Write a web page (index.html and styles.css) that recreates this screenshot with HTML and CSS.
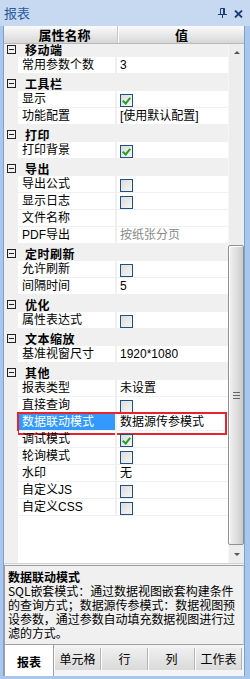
FILE: index.html
```html
<!DOCTYPE html>
<html lang="zh">
<head>
    <meta charset="UTF-8">
    <title>报表属性</title>
    <link rel="stylesheet" href="styles.css">
</head>
<body>
<div class="panel">
    <div class="titlebar">
        <span class="title">报表</span>
        <span class="tools">
            <svg class="pin" width="9" height="10" viewBox="0 0 9 10">
                <path d="M2.5 0.5h4v5.5" fill="none" stroke="#1c3d78" stroke-width="1"/>
                <path d="M2.5 0.5v5.5" fill="none" stroke="#1c3d78" stroke-width="1"/>
                <rect x="5" y="0.5" width="2" height="5.5" fill="#1c3d78"/>
                <rect x="0" y="6" width="9" height="1" fill="#1c3d78"/>
                <rect x="4" y="7" width="1" height="3" fill="#1c3d78"/>
            </svg>
            <svg class="close" width="9" height="8" viewBox="0 0 9 8">
                <path d="M1 0.5l7 7M8 0.5l-7 7" stroke="#1c3d78" stroke-width="1.8"/>
            </svg>
        </span>
    </div>

    <div class="content">
        <div class="grid">
            <div class="grid-head">
                <div class="hc hc-name">属性名称</div>
                <div class="hc hc-value">值</div>
            </div>
            <div class="grid-main">
                <div class="rows">
                    <div class="group"><span class="toggle"></span>移动端</div>
                    <div class="row"><span class="gut"></span><span class="name">常用参数个数</span><span class="value">3</span></div>
                    <div class="group"><span class="toggle"></span>工具栏</div>
                    <div class="row"><span class="gut"></span><span class="name">显示</span><span class="value"><span class="cb checked"></span></span></div>
                    <div class="row"><span class="gut"></span><span class="name">功能配置</span><span class="value">[使用默认配置]</span></div>
                    <div class="group"><span class="toggle"></span>打印</div>
                    <div class="row"><span class="gut"></span><span class="name">打印背景</span><span class="value"><span class="cb checked"></span></span></div>
                    <div class="group"><span class="toggle"></span>导出</div>
                    <div class="row"><span class="gut"></span><span class="name">导出公式</span><span class="value"><span class="cb"></span></span></div>
                    <div class="row"><span class="gut"></span><span class="name">显示日志</span><span class="value"><span class="cb"></span></span></div>
                    <div class="row"><span class="gut"></span><span class="name">文件名称</span><span class="value"></span></div>
                    <div class="row"><span class="gut"></span><span class="name">PDF导出</span><span class="value muted">按纸张分页</span></div>
                    <div class="group"><span class="toggle"></span>定时刷新</div>
                    <div class="row"><span class="gut"></span><span class="name">允许刷新</span><span class="value"><span class="cb"></span></span></div>
                    <div class="row"><span class="gut"></span><span class="name">间隔时间</span><span class="value">5</span></div>
                    <div class="group"><span class="toggle"></span>优化</div>
                    <div class="row"><span class="gut"></span><span class="name">属性表达式</span><span class="value"><span class="cb"></span></span></div>
                    <div class="group"><span class="toggle"></span>文本缩放</div>
                    <div class="row"><span class="gut"></span><span class="name">基准视窗尺寸</span><span class="value">1920*1080</span></div>
                    <div class="group"><span class="toggle"></span>其他</div>
                    <div class="row"><span class="gut"></span><span class="name">报表类型</span><span class="value">未设置</span></div>
                    <div class="row"><span class="gut"></span><span class="name">直接查询</span><span class="value"><span class="cb"></span></span></div>
                    <div class="row selected"><span class="gut"></span><span class="name">数据联动模式</span><span class="value">数据源传参模式</span></div>
                    <div class="row"><span class="gut"></span><span class="name">调试模式</span><span class="value"><span class="cb checked"></span></span></div>
                    <div class="row"><span class="gut"></span><span class="name">轮询模式</span><span class="value"><span class="cb"></span></span></div>
                    <div class="row"><span class="gut"></span><span class="name">水印</span><span class="value">无</span></div>
                    <div class="row"><span class="gut"></span><span class="name">自定义JS</span><span class="value"><span class="cb"></span></span></div>
                    <div class="row"><span class="gut"></span><span class="name">自定义CSS</span><span class="value"><span class="cb"></span></span></div>
                    <div class="filler"><span class="gut"></span></div>
                </div>
                <div class="vscroll">
                    <div class="sbtn"><span class="arrow up"></span></div>
                    <div class="track">
                        <div class="thumb"><span class="grip"></span></div>
                    </div>
                    <div class="sbtn"><span class="arrow down"></span></div>
                </div>
            </div>
        </div>

        <div class="desc">
            <div class="desc-title">数据联动模式</div>
            <div class="desc-text">SQL嵌套模式：通过数据视图嵌套构建条件的查询方式；数据源传参模式：数据视图预设参数，通过参数自动填充数据视图进行过滤的方式。</div>
        </div>

        <div class="tabs">
            <div class="tab active">报表</div>
            <div class="tab">单元格</div>
            <div class="tab">行</div>
            <div class="tab">列</div>
            <div class="tab">工作表</div>
        </div>
    </div>
</div>
</body>
</html>
```

FILE: styles.css
```css
body {
    margin: 0;
    font-family: "Liberation Sans", "Noto Sans CJK SC", sans-serif;
    font-size: 12px;
    color: #000;
    overflow: hidden;
}
.panel {
    width: 250px;
    height: 679px;
    display: flex;
    flex-direction: column;
    background: #a9c6ec;
}
.titlebar {
    height: 26px;
    flex: none;
    display: flex;
    align-items: center;
    justify-content: space-between;
    background: #c6d9f1;
    padding: 0 7px 0 4px;
    box-sizing: border-box;
}
.title {
    font-family: "Noto Sans CJK SC", sans-serif;
    font-size: 13px;
    color: #2a5a9c;
    line-height: 26px;
}
.tools {
    display: flex;
    align-items: center;
    gap: 7px;
}
.pin {
    display: block;
}
.close {
    display: block;
    margin-top: 1px;
}
.content {
    flex: 1;
    display: flex;
    flex-direction: column;
    margin: 0 5px 3px 3px;
    border-left: 1px solid #7d9fd4;
    border-right: 1px solid #7d9fd4;
    background: #f0f0f0;
    min-height: 0;
}

/* property grid */
.grid {
    flex: none;
    display: flex;
    flex-direction: column;
}
.grid-head {
    height: 18px;
    display: flex;
    background: linear-gradient(#fbfbfb, #e9e9e9 50%, #d6d6d6);
    border-bottom: 1px solid #b8b8b8;
    box-sizing: border-box;
}
.hc {
    font-family: "Noto Sans CJK SC", sans-serif;
    font-size: 13px;
    font-weight: bold;
    line-height: 17px;
    text-align: center;
}
.hc-name {
    width: 114px;
    padding-left: 8px;
    box-sizing: border-box;
    border-right: 1px solid #c8c8c8;
}
.hc-value {
    flex: 1;
    border-left: 1px solid #fff;
}
.grid-main {
    height: 519px;
    display: flex;
    border-bottom: 1px solid #d4d4d4;
}
.rows {
    flex: 1;
    overflow: hidden;
    display: flex;
    flex-direction: column;
    background: #fff;
}
.rows > :first-child {
    margin-top: -4px;
}
.group {
    height: 17px;
    flex: none;
    display: flex;
    align-items: center;
    background: #f0f0f0;
    font-family: "Noto Sans CJK SC", sans-serif;
    font-weight: bold;
    letter-spacing: 0.5px;
    padding-top: 1px;
    box-sizing: border-box;
}
.toggle {
    width: 9px;
    height: 9px;
    box-sizing: border-box;
    border: 1px solid #222;
    margin: 0 9px 0 3px;
    position: relative;
    flex: none;
}
.toggle::after {
    content: "";
    position: absolute;
    left: 1px;
    right: 1px;
    top: 3px;
    height: 1px;
    background: #222;
}
.row {
    height: 17px;
    flex: none;
    display: flex;
    position: relative;
}
.gut {
    width: 14px;
    flex: none;
    background: #f0f0f0;
}
.name {
    width: 99px;
    flex: none;
    padding: 1px 0 0 4px;
    box-sizing: border-box;
    border-right: 2px solid #f0f0f0;
    border-bottom: 1px solid #f0f0f0;
    line-height: 15px;
    white-space: nowrap;
}
.value {
    flex: 1;
    padding: 1px 0 0 3px;
    border-bottom: 1px solid #f0f0f0;
    line-height: 15px;
    display: flex;
    align-items: flex-start;
    white-space: nowrap;
}
.muted {
    color: #8a8a8a;
}
.row.selected .name {
    background: #3399ff;
    color: #fff;
}
.row.selected::after {
    content: "";
    position: absolute;
    left: 13px;
    right: 1px;
    top: -2px;
    bottom: -4px;
    border: 2px solid #e8232b;
}
.filler {
    flex: 1;
    display: flex;
}
.cb {
    width: 13px;
    height: 13px;
    margin-top: 2px;
    box-sizing: border-box;
    border: 1px solid #1d5181;
    background: linear-gradient(135deg, #dcdcdc, #f6f6f6);
    position: relative;
}
.cb.checked::after {
    content: "";
    position: absolute;
    left: 3px;
    top: 1px;
    width: 3px;
    height: 6px;
    border: solid #21a121;
    border-width: 0 2px 2px 0;
    transform: rotate(40deg);
}

/* scrollbar */
.vscroll {
    width: 16px;
    flex: none;
    display: flex;
    flex-direction: column;
    background: #ededed;
    border-left: 1px solid #f6f6f6;
    box-sizing: border-box;
}
.sbtn {
    height: 17px;
    flex: none;
    display: flex;
    align-items: center;
    justify-content: center;
}
.arrow {
    width: 0;
    height: 0;
    border-left: 3px solid transparent;
    border-right: 3px solid transparent;
}
.arrow.up {
    border-bottom: 3px solid #555;
}
.arrow.down {
    border-top: 3px solid #555;
}
.track {
    flex: 1;
    padding-top: 184px;
}
.thumb {
    height: 300px;
    margin-left: -1px;
    box-sizing: border-box;
    border: 1px solid #8f8f8f;
    border-radius: 2px;
    background: linear-gradient(90deg, #f2f2f2, #dcdcdc 60%, #c9c9c9);
    box-shadow: inset 1px 1px 0 #fff;
    display: flex;
    align-items: center;
    justify-content: center;
}
.grip {
    width: 7px;
    height: 5px;
    border-top: 1px solid #666;
    border-bottom: 1px solid #666;
    position: relative;
}
.grip::after {
    content: "";
    position: absolute;
    left: 0;
    right: 0;
    top: 2px;
    height: 1px;
    background: #666;
}

/* description */
.desc {
    height: 80px;
    flex: none;
    margin-top: 1px;
    border: 1px solid #a0a0a0;
    border-right-color: #d8d8d8;
    background: #f0f0f0;
    padding: 3px 4px 0 3px;
    box-sizing: border-box;
    font-family: "Noto Sans CJK SC", sans-serif;
    line-height: 14px;
}
.desc-title {
    font-weight: bold;
    line-height: 16px;
    margin-bottom: -1px;
}
.desc-text {
    letter-spacing: -0.05px;
}

/* tabs */
.tabs {
    flex: 1;
    display: flex;
    align-items: flex-start;
    background: #f4f4f4;
    border-left: 1px solid #a0a0a0;
    font-family: "Noto Sans CJK SC", sans-serif;
}
.tab {
    width: 47px;
    height: 22px;
    margin-top: 3px;
    box-sizing: border-box;
    text-align: center;
    line-height: 21px;
    background: linear-gradient(#efefef, #dadada);
    border-right: 1px solid #b4b4b4;
    border-left: 1px solid #fff;
}
.tab.active {
    width: 49px;
    height: 31px;
    margin-top: 0;
    line-height: 33px;
    background: #fff;
    font-weight: bold;
    border-left: none;
    border-right: 1px solid #a0a0a0;
}
```
